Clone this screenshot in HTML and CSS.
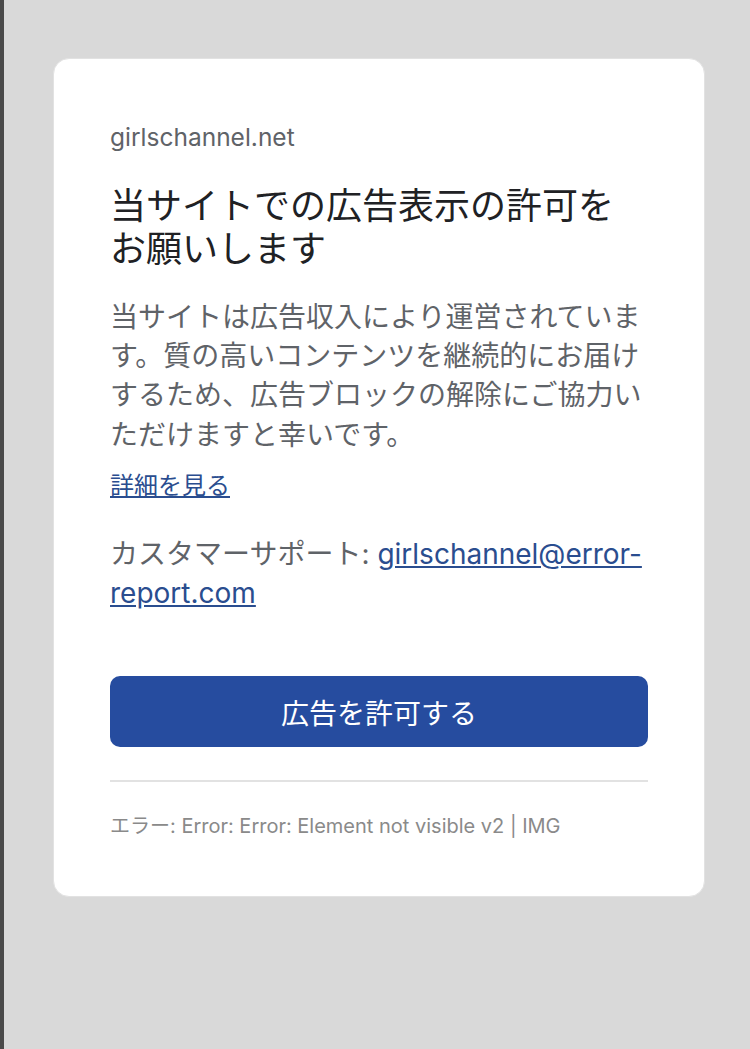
FILE: index.html
```html
<!DOCTYPE html>
<html lang="ja">
<head>
  <meta charset="UTF-8">
  <meta name="viewport" content="width=device-width, initial-scale=1.0">
  <title>girlschannel.net</title>
  <link rel="stylesheet" href="styles.css">
</head>
<body>
  <div class="card">
    <div class="site">girlschannel.net</div>
    <h1>当サイトでの広告表示の許可をお願いします</h1>
    <p class="lead">当サイトは広告収入により運営されています。質の高いコンテンツを継続的にお届けするため、広告ブロックの解除にご協力いただけますと幸いです。</p>
    <a class="more" href="#">詳細を見る</a>
    <p class="support">カスタマーサポート: <a href="#">girlschannel@error-report.com</a></p>
    <button class="btn-allow">広告を許可する</button>
    <hr>
    <div class="err">エラー: Error: Error: Element not visible v2 | IMG</div>
  </div>
</body>
</html>
```

FILE: styles.css
```css
:root{--bg:#d9d9d9;--text:#202124;--muted:#5f6368;--link:#2a4d8f;--btn:#264c9f;--line:#e2e2e2}
html,body{margin:0;height:100%}
body{background:var(--bg);border-left:4px solid #4a4a4a;box-sizing:border-box;padding:58px 45px 0 49px;font-family:Inter,"Noto Sans CJK JP",sans-serif;color:var(--text)}
.card{background:#fff;border:1px solid var(--line);border-radius:16px;padding:63px 56px 56px;display:flex;flex-direction:column}
.site{font-size:24.5px;line-height:30px;color:var(--muted)}
h1{margin:33px 0 0;font-size:36px;line-height:43px;font-weight:400;color:var(--text)}
.lead{margin:27px 0 0;font-size:28px;line-height:39.2px;color:var(--muted)}
.more{align-self:flex-start;margin-top:14px;font-size:24px;line-height:34px;color:var(--link)}
.support{margin:32px 0 0;font-size:28px;line-height:39.2px;color:var(--muted)}
.support a{color:var(--link)}
.btn-allow{margin-top:63px;height:71px;border:none;border-radius:10px;background:var(--btn);color:#fff;font-family:inherit;font-size:28px;cursor:pointer}
hr{margin:33px 0 0;border:none;border-top:2px solid var(--line)}
.err{margin-top:30px;font-size:20px;line-height:28px;color:#8a8a8a}
```
